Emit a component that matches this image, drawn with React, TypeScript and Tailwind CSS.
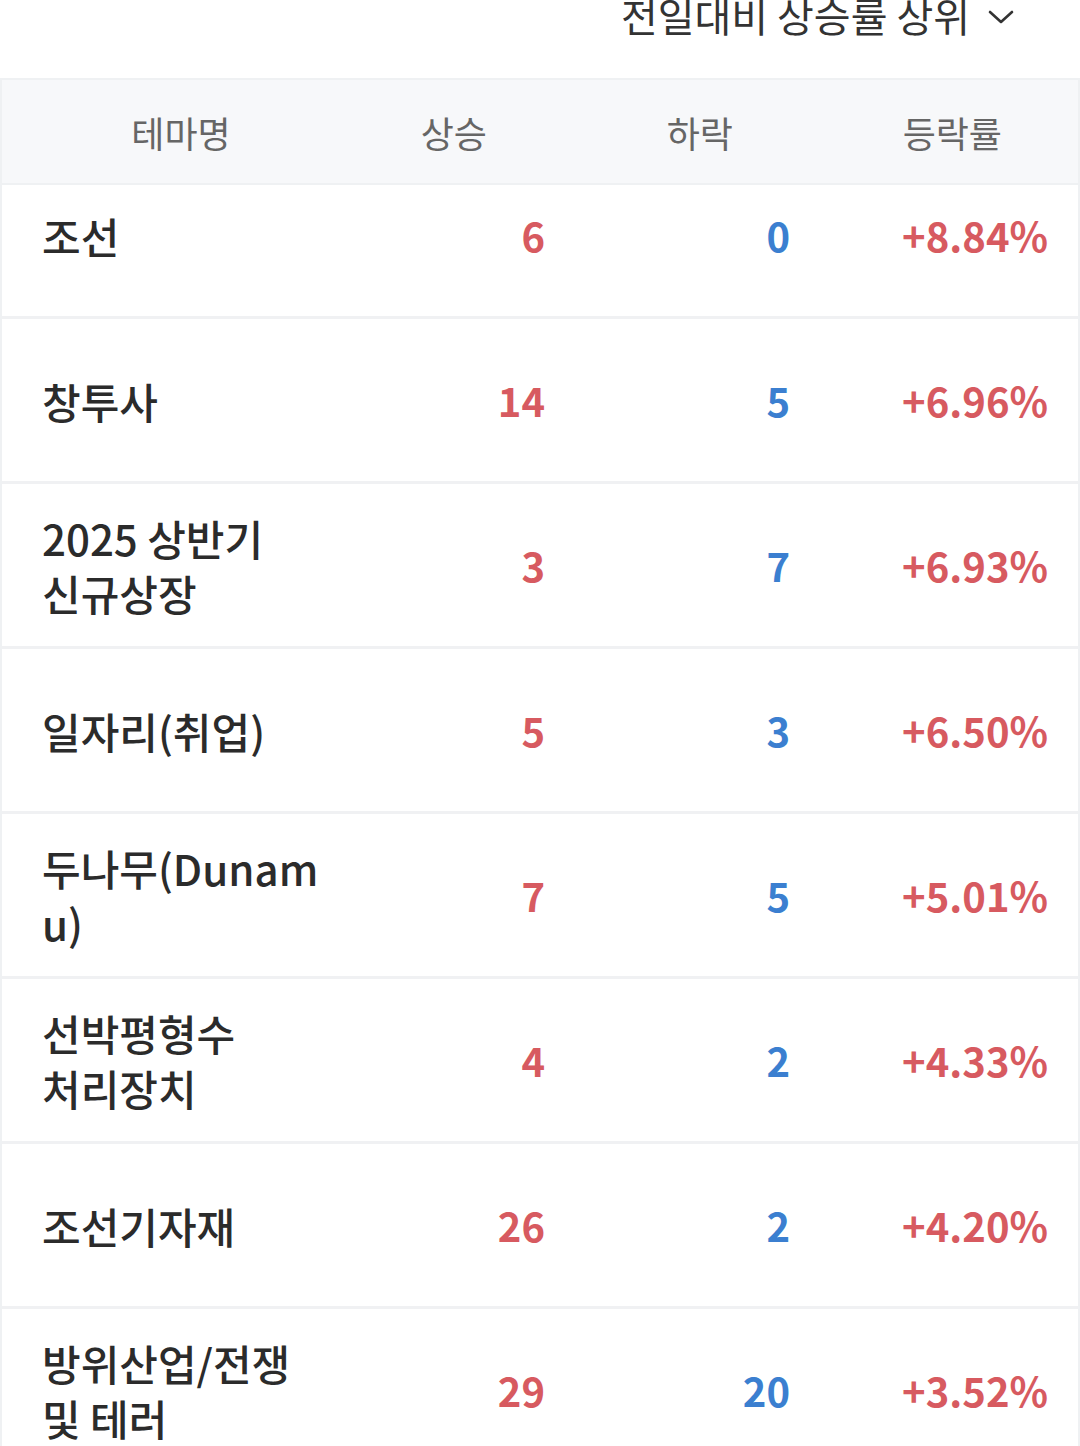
const rows = [
  { name: '조선', up: '6', down: '0', rate: '+8.84%' },
  { name: '창투사', up: '14', down: '5', rate: '+6.96%' },
  { name: '2025 상반기 신규상장', up: '3', down: '7', rate: '+6.93%' },
  { name: '일자리(취업)', up: '5', down: '3', rate: '+6.50%' },
  // word joiner keeps "(" glued to the Hangul so the long word wraps inside, as in the app
  { name: '두나무\u2060(Dunamu)', up: '7', down: '5', rate: '+5.01%' },
  { name: '선박평형수 처리장치', up: '4', down: '2', rate: '+4.33%' },
  { name: '조선기자재', up: '26', down: '2', rate: '+4.20%' },
  { name: '방위산업/전쟁 및 테러', up: '29', down: '20', rate: '+3.52%' },
];

export default function App() {
  return (
    <div className="w-[1080px] h-[1446px] overflow-hidden bg-white font-['Noto_Sans_CJK_KR','Noto_Sans',sans-serif]">
      {/* sort selector, scrolled partly out of view */}
      <div className="h-[78px] flex justify-end items-start pr-[66px]">
        <button className="flex items-center gap-[18px] -mt-[13px] text-[40px] leading-[56px] text-[#333]">
          전일대비 상승률 상위
          <svg width="26" height="16" viewBox="0 0 26 16" fill="none" className="mt-[4px]">
            <path d="M2 3l11 10L24 3" stroke="#333" strokeWidth="2.6" strokeLinecap="round" strokeLinejoin="round" />
          </svg>
        </button>
      </div>

      <div className="border-x-2 border-t-2 border-[#eff1f3]">
        {/* sticky header */}
        <div className="relative z-10 h-[105px] bg-[#f7f8fa] border-b-2 border-[#eff1f3] grid grid-cols-[358px_185px_245px_258px_30px] items-center text-[36px] text-[#666]">
          <div className="text-center">테마명</div>
          <div className="text-right pr-[58px]">상승</div>
          <div className="text-right pr-[57px]">하락</div>
          <div className="text-right pr-[46px]">등락률</div>
          <div />
        </div>

        <div className="-mt-[31px]">
          {rows.map((r) => (
            <div
              key={r.name}
              className="h-[165px] border-b-[3px] border-[#f0f1f3] grid grid-cols-[358px_185px_245px_258px_30px] items-center"
            >
              <div className="min-w-0 pl-[40px] pr-[36px] text-[42px] leading-[55px] font-medium text-[#2b2b2b] break-keep [overflow-wrap:anywhere]">
                {r.name}
              </div>
              <div className="text-right text-[40px] font-bold text-[#d75a60]">{r.up}</div>
              <div className="text-right text-[40px] font-bold text-[#3b7fd0]">{r.down}</div>
              <div className="text-right text-[40px] font-bold text-[#d75a60]">{r.rate}</div>
              <div />
            </div>
          ))}
        </div>
      </div>
    </div>
  );
}
